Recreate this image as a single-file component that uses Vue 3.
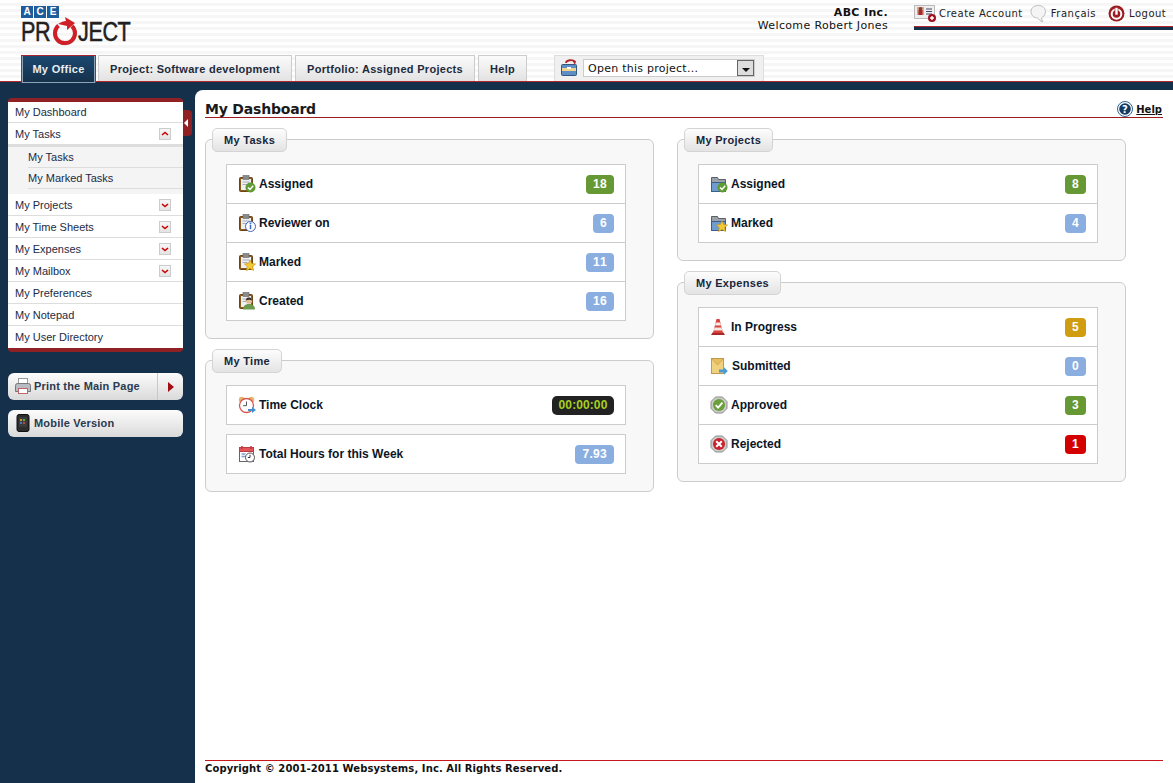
<script setup>
const tabs = [
  { label: 'My Office', active: true },
  { label: 'Project: Software development' },
  { label: 'Portfolio: Assigned Projects' },
  { label: 'Help' }
]
const menu = [
  { label: 'My Dashboard' },
  { label: 'My Tasks', toggle: 'up', sub: ['My Tasks', 'My Marked Tasks'] },
  { label: 'My Projects', toggle: 'down' },
  { label: 'My Time Sheets', toggle: 'down' },
  { label: 'My Expenses', toggle: 'down' },
  { label: 'My Mailbox', toggle: 'down' },
  { label: 'My Preferences' },
  { label: 'My Notepad' },
  { label: 'My User Directory' }
]
const columns = [
  [
    { title: 'My Tasks', boxes: [[
      { icon: 'cbcheck', label: 'Assigned', value: '18', tone: 'green' },
      { icon: 'cbinfo', label: 'Reviewer on', value: '6', tone: 'blue' },
      { icon: 'cbstar', label: 'Marked', value: '11', tone: 'blue' },
      { icon: 'cbuser', label: 'Created', value: '16', tone: 'blue' }
    ]] },
    { title: 'My Time', boxes: [
      [{ icon: 'clock', label: 'Time Clock', value: '00:00:00', tone: 'dark' }],
      [{ icon: 'cal', label: 'Total Hours for this Week', value: '7.93', tone: 'blue' }]
    ] }
  ],
  [
    { title: 'My Projects', boxes: [[
      { icon: 'fcheck', label: 'Assigned', value: '8', tone: 'green' },
      { icon: 'fstar', label: 'Marked', value: '4', tone: 'blue' }
    ]] },
    { title: 'My Expenses', boxes: [[
      { icon: 'cone', label: 'In Progress', value: '5', tone: 'amber' },
      { icon: 'envelope', label: 'Submitted', value: '0', tone: 'blue', shift: true },
      { icon: 'ok', label: 'Approved', value: '3', tone: 'green' },
      { icon: 'no', label: 'Rejected', value: '1', tone: 'red' }
    ]] }
  ]
]
</script>

<template>
  <div class="page">
    <header class="header">
      <div class="top">
        <div class="logo">
          <div class="ace"><span>A</span><span>C</span><span>E</span></div>
          <div class="wordmark">
            <span class="head"><em>PR</em></span>
            <svg class="swirl" width="29" height="30" viewBox="0 0 29 30">
              <path d="M3 19c2 7 8 10 14 9 5-1 8-4 9-8-3 3-8 5-13 4-4-1-8-2-10-5z" fill="#a9a9a9" />
              <path d="M8.500 8.500A10 10 0 1 0 22 9" fill="none" stroke="#cf2027" stroke-width="4" />
              <path d="M8 7c3-2 6-3 8-3l-1-4 10 6-8 7 0-4c-3-1-6-1-9-2z" fill="#cf2027" />
            </svg>
            <span class="tail"><em>JECT</em></span>
          </div>
        </div>
        <div class="company">
          <strong>ABC Inc.</strong>
          <span>Welcome Robert Jones</span>
        </div>
        <nav class="utility">
          <a class="util-link first">
            <svg width="24" height="20" viewBox="0 0 24 20">
              <rect x="0.500" y="1.500" width="20" height="13" fill="#eee" stroke="#bbb" />
              <rect x="3" y="3" width="7" height="8" fill="#d9a38f" />
              <rect x="4.500" y="6" width="4" height="5" fill="#a5262c" />
              <circle cx="6.500" cy="4.800" r="1.800" fill="#8a3a2a" />
              <path d="M12 5h6M12 7.500h6M12 10h6" stroke="#446" />
              <circle cx="18" cy="14" r="4" fill="#a01020" />
              <path d="M16 14h4M18 12v4" stroke="#fff" stroke-width="1.400" />
            </svg>
            Create Account
          </a>
          <a class="util-link fr">
            <svg width="17" height="19" viewBox="0 0 17 19">
              <path d="M8.500 1.500c4 0 7 2.600 7 6s-2.500 5.500-4 6.500l1 4c-2-1-4-3-5-4-3 0-6.500-2.500-6.500-6.500s3.500-6 7.500-6z" fill="#f4f4f4" stroke="#bdbdbd" />
            </svg>
            Français
          </a>
          <a class="util-link out">
            <svg width="17" height="17" viewBox="0 0 17 17">
              <circle cx="8.500" cy="8.500" r="8" fill="#9c1c22" />
              <circle cx="8.500" cy="9" r="4.800" fill="none" stroke="#fff" stroke-width="2" />
              <rect x="7" y="2.500" width="3" height="7.500" fill="#fff" stroke="#9c1c22" stroke-width=".6" />
            </svg>
            Logout
          </a>
        </nav>
      </div>
      <div class="tabs">
        <a v-for="tab in tabs" :key="tab.label" class="tab" :class="{ active: tab.active }">{{ tab.label }}</a>
        <div class="opener">
          <svg width="16" height="17" viewBox="0 0 16 17">
            <path d="M5 4c0-3 7-4 9-1" fill="none" stroke="#b3262c" stroke-width="1.800" />
            <path d="M11 1l4 1-1 4z" fill="#b3262c" />
            <rect x="0.500" y="5.500" width="15" height="11" rx="1" fill="#5d8ec6" stroke="#33587f" />
            <rect x="1" y="9" width="14" height="3" fill="#f0d48a" />
            <rect x="6" y="8" width="4" height="2" fill="#fff" />
          </svg>
          <div class="select">
            <span>Open this project...</span>
            <i class="select-btn"><b></b></i>
          </div>
        </div>
      </div>
    </header>
    <div class="body">
      <aside class="sidebar">
        <div class="menu">
          <template v-for="item in menu" :key="item.label">
            <div class="menu-row" :class="{ open: item.sub }">
              <span>{{ item.label }}</span>
              <i v-if="item.toggle" class="toggle">
                <svg width="10" height="10" viewBox="0 0 10 10">
                  <path :d="item.toggle === 'up' ? 'M2 6l3-2.500 3 2.500' : 'M2 4l3 2.500 3-2.500'" fill="none" stroke="#c00" stroke-width="1.600" />
                </svg>
              </i>
            </div>
            <div v-if="item.sub" class="submenu">
              <div v-for="sub in item.sub" :key="sub" class="sub-row">{{ sub }}</div>
            </div>
          </template>
        </div>
        <button class="collapse" aria-label="Collapse"></button>
        <div class="side-btn print">
          <span class="side-main">
            <svg width="16" height="16" viewBox="0 0 16 16">
              <rect x="3.500" y="0.500" width="9" height="6" fill="#fff" stroke="#999" />
              <path d="M0.500 7.500q0-2 2-2h11q2 0 2 2v6h-15z" fill="#b8bcc2" stroke="#777" />
              <rect x="3.500" y="10.500" width="9" height="5" fill="#fff" stroke="#c0656a" />
            </svg>
            Print the Main Page
          </span>
          <span class="side-arrow"><b></b></span>
        </div>
        <div class="side-btn">
          <span class="side-main">
            <svg width="16" height="18" viewBox="0 0 16 18">
              <rect x="2" y="0.500" width="12" height="17" rx="2" fill="#2d2d2d" stroke="#111" />
              <rect x="4" y="3" width="8" height="10" fill="#3b3b3b" />
              <rect x="5" y="5" width="2" height="2" fill="#c93" />
              <rect x="8" y="5" width="2" height="2" fill="#6a3" />
              <rect x="5" y="8" width="2" height="2" fill="#47b" />
              <rect x="8" y="8" width="2" height="2" fill="#b44" />
            </svg>
            Mobile Version
          </span>
        </div>
      </aside>
      <main class="main">
        <div class="title-bar">
          <h1>My Dashboard</h1>
          <a class="help">
            <svg width="16" height="16" viewBox="0 0 16 16">
              <circle cx="8" cy="8" r="7.500" fill="#fff" stroke="#2c6494" />
              <circle cx="8" cy="8" r="5.800" fill="#143a63" />
              <text x="8" y="11.500" text-anchor="middle" class="q">?</text>
            </svg>
            <span>Help</span>
          </a>
        </div>
        <div class="columns">
          <div v-for="(col, c) in columns" :key="c" class="column">
            <section v-for="panel in col" :key="panel.title" class="panel">
              <div class="legend">{{ panel.title }}</div>
              <div v-for="(box, b) in panel.boxes" :key="b" class="box">
                <div v-for="row in box" :key="row.label" class="row">
                  <span class="icon">
                    <svg width="18" height="18" viewBox="0 0 18 18">
                      <template v-if="row.icon.startsWith('cb')">
                        <rect x="1.500" y="2.500" width="13" height="14" rx="1" fill="#8a5a1e" stroke="#6e4413" />
                        <rect x="3" y="4" width="10" height="11" fill="#eef1f4" />
                        <rect x="5" y="0.500" width="6" height="4" fill="#8a8a8a" stroke="#666" stroke-width=".6" />
                        <path d="M4.500 7h7M4.500 9.500h5" stroke="#aab" />
                      </template>
                      <template v-if="row.icon.startsWith('f')">
                        <path d="M1.500 2.500h6l1 2h7v12h-14z" fill="#9aa1a8" stroke="#596069" />
                        <path d="M1.500 7.500h14v9h-14z" fill="#6f9bcf" stroke="#3a5f8c" />
                      </template>
                      <g v-if="row.icon === 'cbcheck' || row.icon === 'fcheck'">
                        <circle cx="12.500" cy="12.500" r="5" fill="#5f9a32" />
                        <path d="M10 12.500l2 2 3.200-3.800" fill="none" stroke="#fff" stroke-width="1.500" />
                      </g>
                      <g v-if="row.icon === 'cbinfo'">
                        <circle cx="12.500" cy="12.500" r="5" fill="#fff" stroke="#3f66c0" />
                        <path d="M12.500 11v4.200" stroke="#3f66c0" stroke-width="1.500" />
                        <circle cx="12.500" cy="9.500" r=".9" fill="#3f66c0" />
                      </g>
                      <path v-if="row.icon === 'cbstar' || row.icon === 'fstar'" d="M12 7l1.700 3.500 3.800.5-2.800 2.600.8 3.900-3.500-2-3.500 2 .8-3.900L6.500 11l3.800-.5z" fill="#f3c935" stroke="#c9951a" stroke-width=".7" />
                      <g v-if="row.icon === 'cbuser'">
                        <path d="M5 17.500c0-4 3-5.500 6-5.500s6 1.500 6 5.500z" fill="#6d9a4d" />
                        <circle cx="11" cy="8.500" r="3.200" fill="#e4bd96" />
                        <path d="M7.800 8.500c0-4 6.400-4 6.400 0-2-1-4-1-6.400 0z" fill="#333" />
                      </g>
                      <g v-if="row.icon === 'cone'">
                        <path d="M1 17h14l-1.500-2.500h-11z" fill="#a92828" />
                        <path d="M6.500 1h3l3.500 14h-10z" fill="#d9413c" />
                        <path d="M5.700 4.500h4.600l.7 3h-6zM4.500 9.500h7l.7 3h-8.400z" fill="#f5e8e0" />
                      </g>
                      <g v-if="row.icon === 'envelope'">
                        <rect x="1.500" y="1.500" width="12" height="15" fill="#f0d27e" stroke="#c29a4a" />
                        <path d="M2 2l5.500 6 5.500-6" fill="#e6bf60" stroke="#c29a4a" stroke-width=".7" />
                        <path d="M9 12.500h5v-2.200l3.800 3.700-3.800 3.700v-2.200h-5z" fill="#4a9ad8" />
                      </g>
                      <g v-if="row.icon === 'ok' || row.icon === 'no'">
                        <path d="M5.500 1h7l4.500 4.500v7l-4.500 4.500h-7l-4.500-4.500v-7z" fill="#c9cbc9" stroke="#8d8f8d" />
                        <circle cx="9" cy="9" r="6" :fill="row.icon === 'ok' ? '#6a9f3c' : '#c9222c'" />
                        <path v-if="row.icon === 'ok'" d="M5.700 9.200l2.400 2.500 4.300-5" fill="none" stroke="#fff" stroke-width="1.800" />
                        <path v-else d="M6.200 6.200l5.600 5.600M11.800 6.200l-5.600 5.600" stroke="#fff" stroke-width="2" />
                      </g>
                      <g v-if="row.icon === 'clock'">
                        <circle cx="3.800" cy="3.800" r="3" fill="#e5b56a" />
                        <circle cx="13.200" cy="3.800" r="3" fill="#e5b56a" />
                        <circle cx="8.500" cy="9.500" r="7" fill="#fff" stroke="#d9574f" stroke-width="1.300" />
                        <path d="M8.500 5.500v4.200H5" fill="none" stroke="#555" />
                        <path d="M10 13h4v-2l4 3-4 3v-2h-4z" fill="#3f8fd2" />
                      </g>
                      <g v-if="row.icon === 'cal'">
                        <rect x="1.500" y="2.500" width="14" height="14" fill="#fff" stroke="#666" />
                        <rect x="1.500" y="2.500" width="14" height="4" fill="#e2555a" stroke="#c03a40" />
                        <path d="M4 1v3M13 1v3" stroke="#c03a40" stroke-width="1.500" />
                        <path d="M3.500 9h4M3.500 11.500h4" stroke="#7ea1cc" stroke-width="1.500" />
                        <circle cx="12" cy="12.500" r="4.500" fill="#fff" stroke="#555" />
                        <path d="M12 9.800v2.700H9.800" fill="none" stroke="#333" />
                      </g>
                    </svg>
                  </span>
                  <span class="label" :class="{ shifted: row.shift }">{{ row.label }}</span>
                  <span class="badge" :class="row.tone">{{ row.value }}</span>
                </div>
              </div>
            </section>
          </div>
        </div>
        <footer class="footer">Copyright © 2001-2011 Websystems, Inc. All Rights Reserved.</footer>
      </main>
    </div>
  </div>
</template>

<style>
html, body { margin: 0; padding: 0; }
</style>

<style scoped>
.page {
  width: 1173px;
  height: 783px;
  overflow: hidden;
  display: flex;
  flex-direction: column;
  background: #15304a;
  font-family: "Liberation Sans", Arial, sans-serif;
}
.header {
  height: 81px;
  flex: none;
  border-bottom: 1px solid #b3262c;
  background: repeating-linear-gradient(180deg, #fff 0 3px, #f6f6f6 3px 6px);
  display: flex;
  flex-direction: column;
  padding-left: 21px;
}
.top {
  height: 55px;
  display: flex;
  align-items: flex-start;
}
.logo { width: 112px; padding-top: 6px; }
.ace { display: flex; gap: 1px; }
.ace span {
  width: 12px;
  height: 12px;
  background: #1f5c9c;
  color: #fff;
  font: bold 10px/12px "Liberation Sans", sans-serif;
  text-align: center;
}
.wordmark {
  display: flex;
  align-items: flex-start;
  height: 28px;
  margin-top: -1px;
  font: 27px/27px "Liberation Sans", sans-serif;
  color: #231f20;
  -webkit-text-stroke: .5px #231f20;
}
.wordmark em {
  display: inline-block;
  font-style: normal;
  transform-origin: left top;
  white-space: nowrap;
}
.head { width: 29px; padding-top: 2px; }
.head em { transform: scaleX(.8); letter-spacing: -.5px; }
.tail { width: 52px; padding-top: 2px; }
.tail em { transform: scaleX(.8); letter-spacing: -.5px; }
.swirl { flex: none; margin-right: -1px; }
.company {
  margin-left: auto;
  margin-top: 6px;
  display: flex;
  flex-direction: column;
  align-items: flex-end;
  font: 11px/13px "DejaVu Sans", Verdana, sans-serif;
  letter-spacing: .35px;
  color: #111;
}
.company strong { font-weight: bold; }
.utility {
  width: 259px;
  height: 30px;
  margin-left: 26px;
  box-sizing: border-box;
  display: flex;
  align-items: flex-start;
  border-bottom: 3px solid #15304a;
  box-shadow: inset 0 -1px 0 #b3262c;
  font: 10px/14px "DejaVu Sans", Verdana, sans-serif;
  letter-spacing: .5px;
  color: #222;
}
.util-link { display: flex; align-items: center; height: 27px; }
.util-link svg { flex: none; }
.first svg { margin-right: 1px; }
.fr { margin-left: 7px; }
.fr svg { margin-right: 4px; }
.out { margin-left: 12px; }
.out svg { margin-right: 4px; }
.tabs {
  height: 26px;
  display: flex;
  gap: 3px;
}
.tab {
  box-sizing: border-box;
  height: 26px;
  padding: 0 11px;
  display: flex;
  align-items: center;
  border: 1px solid #ccc;
  border-bottom: 0;
  background: linear-gradient(180deg, #fbfbfb, #e2e2e2);
  font-size: 11px;
  font-weight: bold;
  letter-spacing: .3px;
  color: #1d2b3c;
}
.tab.active {
  height: 28px;
  width: 75px;
  padding: 0 0 2px;
  justify-content: center;
  margin-right: -1px;
  border: 1px solid #a8262f;
  border-bottom: 0;
  box-shadow: inset 1px 0 0 #8ea3b7, inset -1px 0 0 #8ea3b7, inset 0 -1px 0 #8ea3b7;
  background: linear-gradient(180deg, #1b4870, #15304a);
  color: #e8edf2;
}
.opener {
  box-sizing: border-box;
  width: 210px;
  margin-left: 24px;
  padding: 3px 8px 0 6px;
  display: flex;
  align-items: flex-start;
  gap: 6px;
  border: 1px solid #ddd;
  border-bottom: 0;
  background: #f0f0f0;
}
.select {
  box-sizing: border-box;
  flex: 1;
  height: 18px;
  border: 1px solid #ccc;
  background: #fff;
  display: flex;
  align-items: center;
  justify-content: space-between;
  padding-left: 4px;
  font: 11px/16px "DejaVu Sans", Verdana, sans-serif;
  letter-spacing: .25px;
  color: #111;
}
.select span { padding-top: 1px; }
.select-btn {
  box-sizing: border-box;
  width: 17px;
  height: 16px;
  border: 1px solid #666;
  background: #ddd;
  display: flex;
  align-items: center;
  justify-content: center;
}
.select-btn b {
  margin-top: 3px;
  border: 4px solid transparent;
  border-top: 4px solid #111;
  border-bottom: 0;
}
.body {
  flex: 1;
  min-height: 0;
  padding-top: 8px;
  display: flex;
}
.sidebar {
  position: relative;
  box-sizing: border-box;
  width: 195px;
  flex: none;
  padding: 8px 12px 0 8px;
}
.menu {
  background: #fff;
  border-top: 4px solid #8f2024;
  border-bottom: 4px solid #8f2024;
  border-radius: 4px;
  margin-bottom: 21px;
}
.menu-row {
  box-sizing: border-box;
  height: 22px;
  padding: 0 12px 0 7px;
  display: flex;
  align-items: center;
  justify-content: space-between;
  border-bottom: 1px solid #ddd;
  font-size: 11px;
  color: #1c2b44;
}
.menu-row:first-child { height: 21px; }
.menu-row:last-child { border-bottom: 0; }
.menu-row.open { border-bottom: 3px solid #ddd; height: 24px; }
.toggle {
  box-sizing: border-box;
  width: 12px;
  height: 12px;
  border: 1px solid #ccc;
  background: linear-gradient(180deg, #f6f6f6, #e4e4e4);
  display: flex;
}
.submenu {
  background: #f4f4f4;
  padding: 0 0 5px 20px;
}
.sub-row {
  box-sizing: border-box;
  height: 21px;
  line-height: 20px;
  border-bottom: 1px solid #ddd;
  font-size: 11px;
  color: #1c2b44;
}
.collapse {
  position: absolute;
  left: 183px;
  top: 20px;
  width: 9px;
  height: 26px;
  padding: 0;
  border: 0;
  border-radius: 0 4px 4px 0;
  background: #8f2024;
}
.collapse::after {
  content: "";
  position: absolute;
  left: 1px;
  top: 9px;
  border: 4px solid transparent;
  border-right-color: #fff;
  border-left: 0;
}
.side-btn {
  box-sizing: border-box;
  height: 27px;
  margin-bottom: 10px;
  display: flex;
  border-radius: 6px;
  background: linear-gradient(180deg, #fcfcfc, #dadada);
  font-size: 11px;
  font-weight: bold;
  letter-spacing: .2px;
  color: #2a3a50;
}
.side-main {
  flex: 1;
  display: flex;
  align-items: center;
  gap: 2px;
  padding: 0 0 2px 7px;
}
.side-main svg { flex: none; margin-right: 1px; }
.side-arrow {
  width: 25px;
  border-left: 1px solid #c8c8c8;
  display: flex;
  align-items: center;
  justify-content: center;
}
.side-arrow b {
  border: 5px solid transparent;
  border-left: 6px solid #a00f14;
  border-right: 0;
}
.main {
  flex: 1;
  min-width: 0;
  box-sizing: border-box;
  padding: 0 10px;
  display: flex;
  flex-direction: column;
  background: #fff;
  border-top-left-radius: 8px;
}
.title-bar {
  box-sizing: border-box;
  height: 28px;
  display: flex;
  justify-content: space-between;
  align-items: flex-end;
  border-bottom: 1px solid #9c1c22;
}
h1 {
  margin: 0;
  font: bold 14px/15px "DejaVu Sans", Verdana, sans-serif;
  letter-spacing: -.2px;
  color: #1a1a1a;
}
.help {
  display: flex;
  align-items: center;
  gap: 3px;
  margin-bottom: 0;
  margin-right: 1px;
  font: bold 10px/14px "DejaVu Sans", Verdana, sans-serif;
  color: #111;
}
.help span { text-decoration: underline; padding-top: 1px; }
.q {
  font: bold 10px "DejaVu Sans", sans-serif;
  fill: #fff;
}
.columns {
  display: flex;
  gap: 23px;
  padding-top: 21px;
}
.column {
  width: 449px;
  display: flex;
  flex-direction: column;
  gap: 21px;
}
.panel {
  box-sizing: border-box;
  padding: 0 27px 17px 20px;
  border: 1px solid #ccc;
  border-radius: 6px;
  background: #f8f8f8;
}
.legend {
  box-sizing: border-box;
  width: fit-content;
  height: 24px;
  margin: -12px 0 12px -14px;
  padding: 0 11px;
  display: flex;
  align-items: center;
  border: 1px solid #d4d4d4;
  border-radius: 5px;
  background: linear-gradient(180deg, #fdfdfd, #e3e3e3);
  font-size: 11px;
  font-weight: bold;
  letter-spacing: .3px;
  color: #16263c;
}
.box {
  border: 1px solid #ccc;
  background: #fff;
}
.box + .box { margin-top: 9px; }
.row {
  box-sizing: border-box;
  height: 38px;
  padding: 0 11px;
  display: flex;
  align-items: center;
}
.row + .row {
  height: 39px;
  border-top: 1px solid #ccc;
}
.icon {
  width: 21px;
  height: 18px;
  flex: none;
}
.label {
  flex: 1;
  font-size: 12px;
  font-weight: bold;
  color: #0c1626;
}
.label.shifted { padding-left: 1px; }
.badge {
  box-sizing: border-box;
  min-width: 21px;
  height: 19px;
  padding: 0 7px;
  border-radius: 4px;
  font-size: 12px;
  font-weight: bold;
  font-kerning: none;
  line-height: 19px;
  text-align: center;
  letter-spacing: .3px;
  color: #fff;
}
.green { background: #669933; }
.blue { background: #8aaee0; }
.amber { background: #d09c10; }
.red { background: #d40000; }
.dark { background: #222; color: #a6d020; padding: 0; width: 62px; border-radius: 5px; letter-spacing: .1px; }
.footer {
  box-sizing: border-box;
  margin-top: auto;
  height: 23px;
  padding-top: 1px;
  border-top: 1px solid #c8161d;
  font: bold 10px/14px "DejaVu Sans", Verdana, sans-serif;
  letter-spacing: .09px;
  color: #111;
}
</style>
